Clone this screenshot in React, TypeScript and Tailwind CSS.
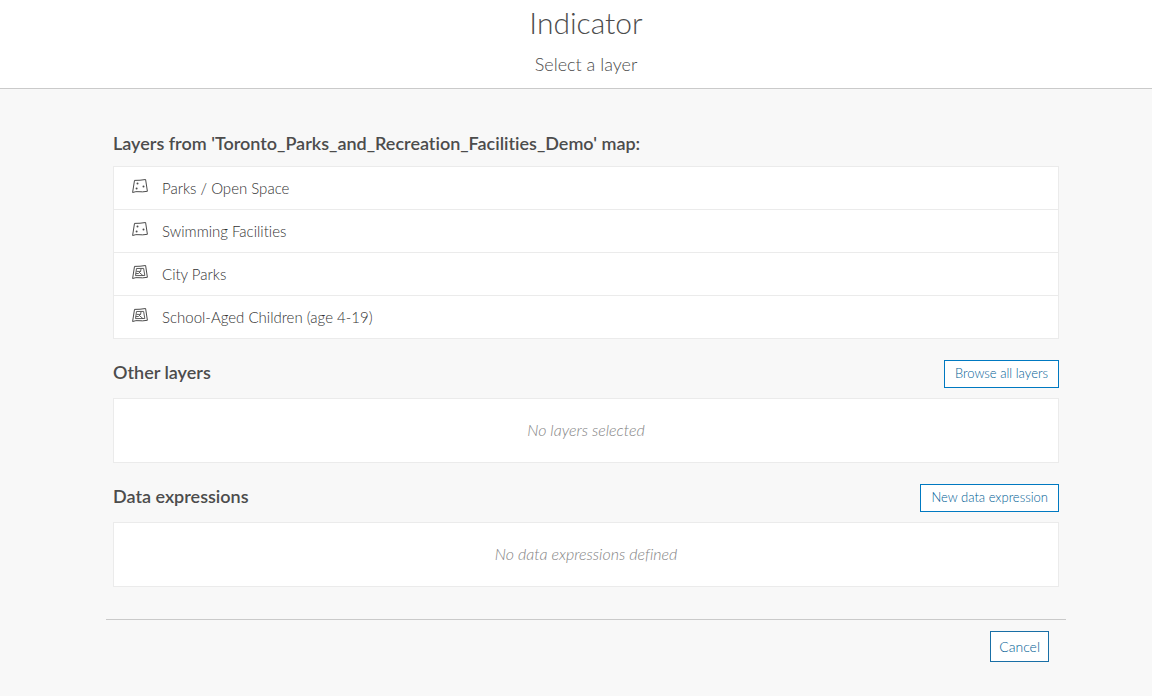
import type { ReactNode } from "react";

type Geometry = "point" | "polygon";

const layers: { name: string; geometry: Geometry }[] = [
  { name: "Parks / Open Space", geometry: "point" },
  { name: "Swimming Facilities", geometry: "point" },
  { name: "City Parks", geometry: "polygon" },
  { name: "School-Aged Children (age 4-19)", geometry: "polygon" },
];

function LayerIcon({ geometry }: { geometry: Geometry }) {
  return (
    <svg viewBox="0 0 16 16" className="mb-1 size-4 shrink-0" fill="none" stroke="#4c4c4c" aria-hidden="true">
      <path d="M2.5 2.4Q8 2.5 13.6 1.5L15.4 13.3Q10 14.2 7 13.7T.6 14.5Z" />
      {geometry === "point" ? (
        <g fill="#4c4c4c" stroke="none">
          <circle cx="5.5" cy="5.5" r="1" />
          <circle cx="11.5" cy="8.5" r="1" />
          <circle cx="4.6" cy="10.5" r="1" />
        </g>
      ) : (
        <path d="M4.5 4.5 11.6 4.4 12.8 11.5 3.5 11.6ZM4.5 7.4H8.6L9 4.8M8.6 7.4 6.4 9.5 3.8 9.6M7.4 8.6 10.8 11.4" strokeWidth=".9" />
      )}
    </svg>
  );
}

function OutlineButton({ children }: { children: ReactNode }) {
  return (
    <button type="button" className="h-7 border border-[#0079c1] bg-white px-2.5 text-[13px] font-light text-[#005e95] hover:bg-[#eef6fb]">
      {children}
    </button>
  );
}

function EmptySection({ title, action, message }: { title: string; action: string; message: string }) {
  return (
    <section>
      <div className="flex h-[59px] items-end justify-between pb-2.5">
        <h2 className="pb-1 text-[18px] leading-6 font-semibold">{title}</h2>
        <OutlineButton>{action}</OutlineButton>
      </div>
      <p className="flex h-[65px] items-center justify-center border border-[#ebebeb] bg-white pb-0.5 text-[16px] font-light text-[#858585] italic">
        {message}
      </p>
    </section>
  );
}

export default function App() {
  return (
    <div className="min-h-screen bg-[#f8f8f8] font-['Lato','Open_Sans',sans-serif] text-[#4c4c4c] [font-variant-ligatures:none]">
      <header className="border-b border-[#cacaca] bg-white pb-3 pl-5 text-center">
        <h1 className="pt-0.5 text-[30px] leading-10 font-light">Indicator</h1>
        <p className="pt-2.5 text-[18px] leading-6 font-light">Select a layer</p>
      </header>
      <main className="pt-[42px] pl-5">
        <div className="mx-auto max-w-[960px]">
          <div className="px-[7px]">
            <h2 className="text-[18px] leading-6 font-semibold">
              Layers from 'Toronto_Parks_and_Recreation_Facilities_Demo' map:
            </h2>
            <ul className="mt-[11px] divide-y divide-[#ebebeb] border border-[#ebebeb] bg-white">
              {layers.map((layer) => (
                <li key={layer.name}>
                  <button type="button" className="flex h-[42px] w-full items-center gap-3.5 px-[18px] text-left text-[15px] font-light text-[#333333] hover:bg-[#f3f3f3]">
                    <LayerIcon geometry={layer.geometry} />
                    {layer.name}
                  </button>
                </li>
              ))}
            </ul>
            <EmptySection title="Other layers" action="Browse all layers" message="No layers selected" />
            <EmptySection title="Data expressions" action="New data expression" message="No data expressions defined" />
          </div>
          <footer className="mt-8 flex justify-end border-t border-[#cacaca] pt-[11px] pr-[17px]">
            <button type="button" className="h-[31px] border border-[#196fa6] bg-white px-2 text-[14px] font-light text-[#005e95] hover:bg-[#eef6fb]">
              Cancel
            </button>
          </footer>
        </div>
      </main>
    </div>
  );
}
